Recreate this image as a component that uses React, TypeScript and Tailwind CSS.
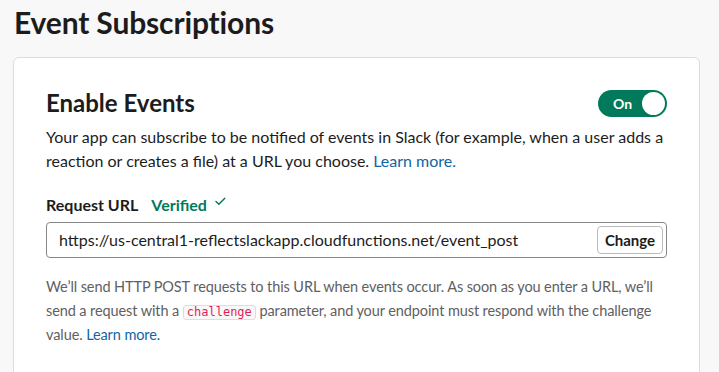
import React from "react";

const Toggle: React.FC = () => (
  <div className="flex items-center w-[69px] h-[27px] rounded-full bg-[#007a5a] pl-[15px] pr-[2px]">
    <span className="text-white text-[14px] font-bold">On</span>
    <span className="ml-auto w-[23px] h-[23px] rounded-full bg-white" />
  </div>
);

const App: React.FC = () => {
  return (
    <div className="min-h-screen bg-[#f8f8f8] text-[#1d1c1d] font-['Lato','Liberation_Sans',sans-serif] overflow-hidden">
      <h1 className="pl-[14px] pt-[2px] text-[30px] font-bold leading-[40px] tracking-[-0.15px]">
        Event Subscriptions
      </h1>

      <div className="mt-[15px] ml-[13px] w-[687px] bg-white border border-[#dddddd] rounded-[6px] pt-[30px] px-[32px] pb-[40px]">
        {/* Enable Events */}
        <div className="flex items-center justify-between h-[30px]">
          <h2 className="text-[24px] font-bold leading-[30px]">Enable Events</h2>
          <Toggle />
        </div>
        <p className="mt-[7px] text-[16px] leading-[24px]">
          Your app can subscribe to be notified of events in Slack (for example, when a user adds a
          reaction or creates a file) at a URL you choose.{" "}
          <a className="text-[#1264a3]">Learn more.</a>
        </p>

        {/* Request URL */}
        <div className="mt-[20px] flex items-center h-[24px]">
          <span className="text-[16px] font-bold">Request URL</span>
          <span className="ml-[13px] text-[16px] font-bold text-[#007a5a]">Verified</span>
          <svg width="11" height="9" viewBox="0 0 11 9" className="ml-[8px] -mt-[8px]">
            <path d="M1 4.5 L3.8 7.2 L9.8 1.2" fill="none" stroke="#007a5a" strokeWidth="1.4" strokeLinecap="round" strokeLinejoin="round" />
          </svg>
        </div>
        <div className="mt-[5px] flex items-center h-[36px] border border-[#868686] rounded-[4px] pl-[12px] pr-[3px]">
          <span className="text-[16px]">
            https://us-central1-reflectslackapp.cloudfunctions.net/event_post
          </span>
          <button className="ml-auto w-[66px] h-[28px] border border-[#bbbbbb] rounded-[4px] bg-white text-[15px] font-bold text-[#1d1c1d]">
            Change
          </button>
        </div>
        <p className="mt-[17px] text-[14.5px] tracking-[-0.1px] leading-[24px] text-[#616061]">
          We’ll send HTTP POST requests to this URL when events occur. As soon as you enter a URL, we’ll
          send a request with a{" "}
          <code className="inline-block px-[3px] leading-[13px] rounded-[3px] border border-[#dddddd] bg-[#f8f8f8] text-[#e01e5a] text-[12px] tracking-normal font-['DejaVu_Sans_Mono',monospace]">
            challenge
          </code>{" "}
          parameter, and your endpoint must respond with the challenge value.{" "}
          <a className="text-[#1264a3]">Learn more.</a>
        </p>
      </div>
    </div>
  );
};

export default App;
